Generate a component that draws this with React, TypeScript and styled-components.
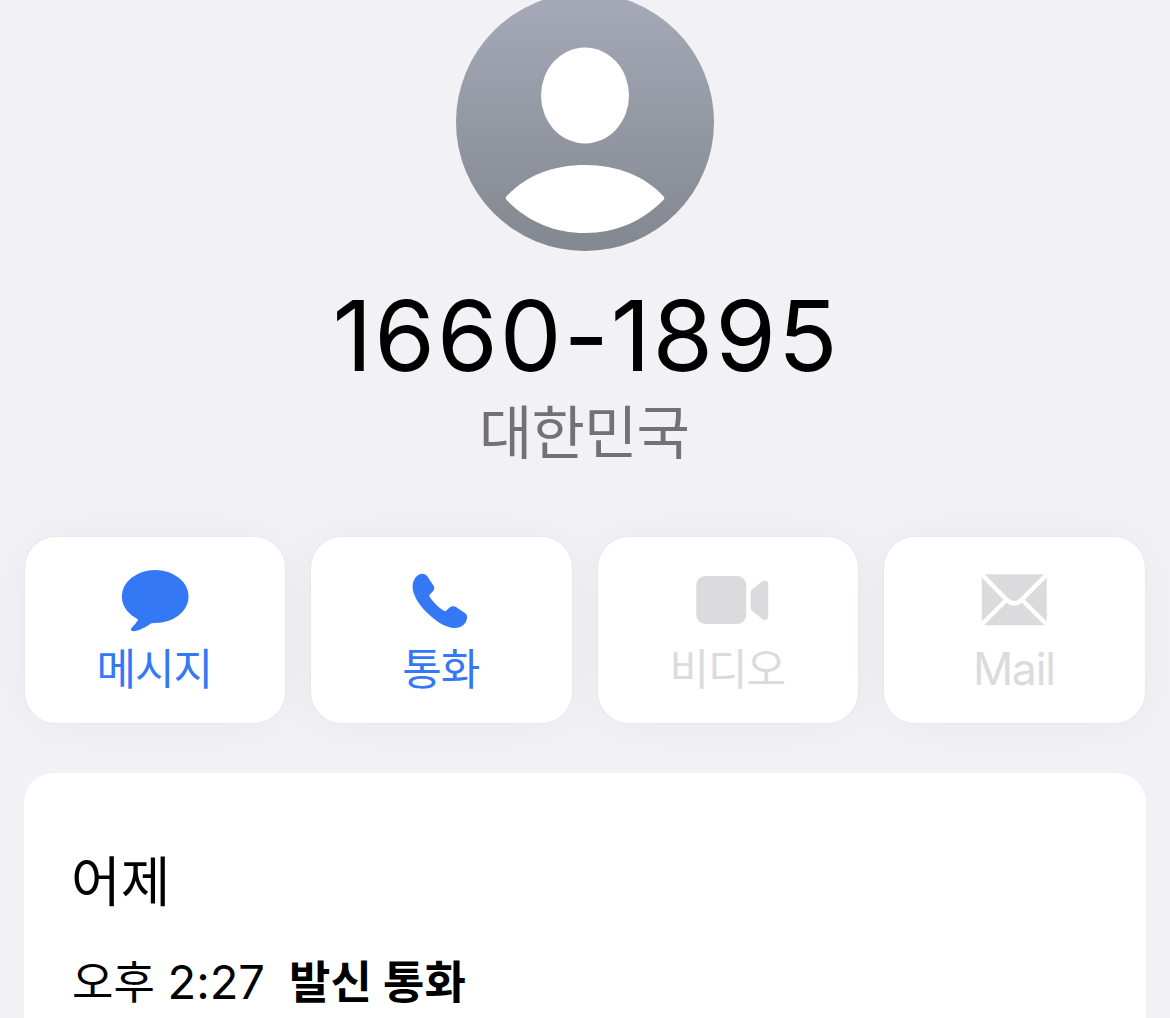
import styled, { createGlobalStyle } from "styled-components";

const GlobalStyle = createGlobalStyle`
  * {
    box-sizing: border-box;
  }
  body {
    margin: 0;
    background-color: #f2f1f6;
    font-family: Inter, "Noto Sans CJK KR", sans-serif;
    color: #000;
    overflow: hidden;
  }
`;

const Screen = styled.main`
  height: 1018px;
  overflow: hidden;
  display: flex;
  flex-direction: column;
`;

const Header = styled.header`
  height: 537px;
  flex-shrink: 0;
  display: flex;
  flex-direction: column;
  align-items: center;
`;

const Avatar = styled.svg`
  width: 258px;
  height: 258px;
  margin-top: -7px;
  flex-shrink: 0;
`;

const PhoneNumber = styled.h1`
  margin: 36px 0 0;
  padding-left: 2px;
  font-size: 98px;
  line-height: 98px;
  font-weight: 400;
  letter-spacing: 2px;
  font-feature-settings: "calt" 0;
  white-space: nowrap;
`;

const Country = styled.p`
  margin: 8px 2px 0 0;
  font-family: "Noto Sans CJK KR", sans-serif;
  font-size: 58px;
  line-height: 72px;
  letter-spacing: -0.8px;
  color: #727274;
`;

const Actions = styled.nav`
  display: grid;
  flex-shrink: 0;
  grid-template-columns: repeat(4, 1fr);
  gap: 26px;
  padding: 0 25.4px 0 24.6px;
`;

const ActionButton = styled.button<{ $disabled?: boolean }>`
  height: 186px;
  padding: 32px 0 0;
  border: 0;
  border-radius: 31px;
  background-color: #fff;
  box-shadow:
    0 0 2px rgba(0, 0, 0, 0.08),
    0 2px 50px rgba(0, 0, 0, 0.04);
  color: ${(props) => (props.$disabled ? "#dbdbdd" : "#3478f6")};
  display: flex;
  flex-direction: column;
  align-items: center;
`;

const Icon = styled.svg`
  width: 84px;
  height: 64px;
  fill: currentColor;
  flex-shrink: 0;
`;

const Label = styled.span`
  margin: 6px 1px 0 0;
  font-family: Inter, "Noto Sans CJK KR", sans-serif;
  font-size: 43px;
  line-height: 60px;
  letter-spacing: -1px;
  white-space: nowrap;
`;

const MailLabel = styled(Label)`
  font-size: 44.5px;
  letter-spacing: -1.2px;
`;

const History = styled.section`
  flex: 1;
  margin: 50px 24px 0;
  padding: 70px 47px 0;
  border-radius: 30px 30px 0 0;
  background-color: #fff;
`;

const Day = styled.h2`
  margin: 0;
  font-size: 54px;
  line-height: 80px;
  font-weight: 400;
  letter-spacing: 0;
`;

const CallRow = styled.div`
  display: flex;
  align-items: baseline;
  gap: 24px;
  margin-top: 24px;
  font-size: 45px;
  line-height: 70px;
  white-space: nowrap;
`;

const Time = styled.span`
  padding-left: 1px;
`;

const Clock = styled.span`
  font-size: 47px;
`;

const Kind = styled.strong`
  font-weight: 700;
  letter-spacing: 0.2px;
`;

const MessageIcon = () => (
  <Icon viewBox="-2 0 84 64">
    <ellipse cx="40.2" cy="27.5" rx="33.4" ry="26.5" />
    <path d="M22 48.5Q24 50.5 22 52.5C20.5 55 18.5 56.8 16.8 58.5C15.2 60.2 16 62.3 18.5 62.2C24.5 61.8 31.5 57.5 36 54.5Q37.5 53.6 40 54L32 45Z" />
  </Icon>
);

const CallIcon = () => (
  <Icon viewBox="-2 0 84 64">
    <path d="M21.4 4.7C23.5 4.7 25 5.5 26.3 7.3L32.6 16.8C33.8 18.8 33.5 20.8 31.8 22.6L28.8 25.6C28.2 26.3 28.2 26.8 28.6 27.5C31 32 38 38.8 42.8 41.8C43.8 42.4 44.6 42.4 45.4 41.6L48.6 38.6C50.7 36.8 53.2 36.7 55.4 38.2L63.8 44.1C65.6 45.4 66.3 46.8 66.1 48.8C65.5 54.6 60.8 59 53.8 59C45 59 35.2 53 25.8 43.6C17 34.8 11.6 25.4 11.6 17.6C11.6 10.4 16.2 4.7 21.4 4.7Z" />
  </Icon>
);

const VideoIcon = () => (
  <Icon viewBox="-2 0 84 64">
    <rect x="8.25" y="7" width="50" height="48" rx="9" />
    <path d="M62.6 23.4Q62.6 21.8 63.8 20.8L73.6 12.8C76.6 10.4 80.2 11.6 80.2 15V47.4C80.2 50.8 76.6 52.1 73.6 49.6L63.8 41.4Q62.6 40.4 62.6 38.8Z" />
  </Icon>
);

const MailIcon = () => (
  <Icon viewBox="-2 0 84 64">
    <rect x="7.75" y="5.3" width="65" height="51" rx="3.5" />
    <g fill="none" stroke="#fff" strokeWidth="4.4">
      <path d="M6 3.7L32.6 30.6Q40.2 38.2 47.8 30.6L74.5 3.7" />
      <path d="M6 57.3L32 31.3M74.5 57.3L48.4 31.3" />
    </g>
  </Icon>
);

const App = () => {
  return (
    <>
      <GlobalStyle />
      <Screen>
        <Header>
          <Avatar viewBox="0 0 258 258">
            <defs>
              <linearGradient id="avatar" x1="0" y1="0" x2="0" y2="1">
                <stop offset="0" stopColor="#a6aab8" />
                <stop offset="1" stopColor="#83878f" />
              </linearGradient>
            </defs>
            <circle cx="129" cy="129" r="129" fill="url(#avatar)" />
            <ellipse cx="129" cy="102.5" rx="44" ry="48" fill="#fff" />
            <path
              d="M50.4 203.5C69 183 97 172 129 172C161 172 189 183 207.6 203.5Q209 205.2 207.6 206.8C186 229 159 240 129 240C99 240 72 229 50.4 206.8Q49 205.2 50.4 203.5Z"
              fill="#fff"
            />
          </Avatar>
          <PhoneNumber>1660-1895</PhoneNumber>
          <Country>대한민국</Country>
        </Header>
        <Actions>
          <ActionButton>
            <MessageIcon />
            <Label>메시지</Label>
          </ActionButton>
          <ActionButton>
            <CallIcon />
            <Label>통화</Label>
          </ActionButton>
          <ActionButton $disabled>
            <VideoIcon />
            <Label>비디오</Label>
          </ActionButton>
          <ActionButton $disabled>
            <MailIcon />
            <MailLabel>Mail</MailLabel>
          </ActionButton>
        </Actions>
        <History>
          <Day>어제</Day>
          <CallRow>
            <Time>
              오후 <Clock>2:27</Clock>
            </Time>
            <Kind>발신 통화</Kind>
          </CallRow>
        </History>
      </Screen>
    </>
  );
};

export default App;
